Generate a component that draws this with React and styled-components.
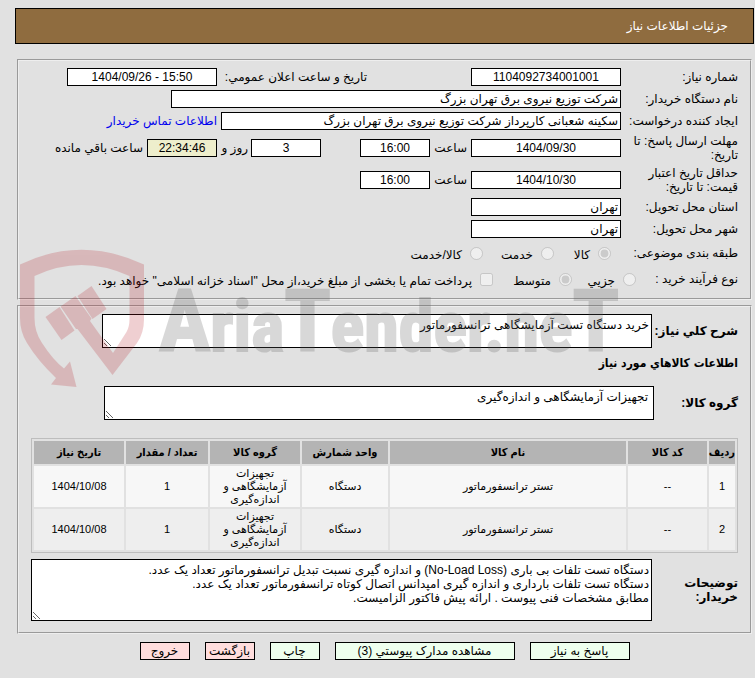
import styled, { createGlobalStyle } from "styled-components";

const items = [
    { row: 1, code: "--", name: "تستر ترانسفورماتور", unit: "دستگاه", group: "تجهیزات آزمایشگاهی و اندازه‌گیری", count: 1, date: "1404/10/08" },
    { row: 2, code: "--", name: "تستر ترانسفورماتور", unit: "دستگاه", group: "تجهیزات آزمایشگاهی و اندازه‌گیری", count: 1, date: "1404/10/08" },
];

const comment = `دستگاه تست تلفات بی باری (No-Load Loss) و اندازه گیری نسبت تبدیل ترانسفورماتور تعداد یک عدد.
دستگاه تست تلفات بارداری و اندازه گیری امپدانس اتصال کوتاه ترانسفورماتور تعداد یک عدد.
مطابق مشخصات فنی پیوست . ارائه پیش فاکتور الزامیست.`;

const App = () => {
    return (
        <Page dir="rtl">
            <GlobalStyle />
            <Header><Title>جزئیات اطلاعات نیاز</Title></Header>
            <Panel $last={false}>
                <Row>
                    <Label htmlFor="number">شماره نیاز:</Label>
                    <Field id="number" $w={150} $center readOnly value="1104092734001001" />
                    <Side $start={104} $w={146} htmlFor="announce">تاریخ و ساعت اعلان عمومي:</Side>
                    <Field id="announce" $w={150} $center readOnly dir="ltr" value="1404/09/26 - 15:50" />
                </Row>
                <Row>
                    <Label htmlFor="buyer">نام دستگاه خریدار:</Label>
                    <Field id="buyer" $w={450} readOnly value="شرکت توزیع نیروی برق تهران بزرگ" />
                </Row>
                <Row>
                    <Label htmlFor="creator">ایجاد کننده درخواست:</Label>
                    <Field id="creator" $w={400} readOnly value="سکینه شعبانی کارپرداز شرکت توزیع نیروی برق تهران بزرگ" />
                    <ContactLink href="#">اطلاعات تماس خریدار</ContactLink>
                </Row>
                <Row $h={32}>
                    <Label htmlFor="deadline">مهلت ارسال پاسخ: تا تاریخ:</Label>
                    <Field id="deadline" $w={150} $center readOnly value="1404/09/30" />
                    <Unit htmlFor="deadlineHour">ساعت</Unit>
                    <Field id="deadlineHour" $w={70} $center readOnly value="16:00" />
                    <Gap />
                    <Field id="days" $w={70} $center readOnly value="3" />
                    <Days htmlFor="days">روز و</Days>
                    <Field id="left" $w={70} $center $bg="#eeeecc" readOnly value="22:34:46" />
                    <Side $start={4} htmlFor="left">ساعت باقي مانده</Side>
                </Row>
                <Row $h={32}>
                    <Label htmlFor="validity">حداقل تاریخ اعتبار قیمت: تا تاریخ:</Label>
                    <Field id="validity" $w={150} $center readOnly value="1404/10/30" />
                    <Unit htmlFor="validityHour">ساعت</Unit>
                    <Field id="validityHour" $w={70} $center readOnly value="16:00" />
                </Row>
                <Row>
                    <Label htmlFor="province">استان محل تحویل:</Label>
                    <Field id="province" $w={150} readOnly value="تهران" />
                </Row>
                <Row>
                    <Label htmlFor="city">شهر محل تحویل:</Label>
                    <Field id="city" $w={150} readOnly value="تهران" />
                </Row>
                <Row $h={26}>
                    <Caption $w={127}>طبقه بندی موضوعی:</Caption>
                    <Choice $w={57}><Tick type="radio" name="subject" disabled defaultChecked /><span>کالا</span></Choice>
                    <Choice $w={71}><Tick type="radio" name="subject" disabled /><span>خدمت</span></Choice>
                    <Choice><Tick type="radio" name="subject" disabled /><span>کالا/خدمت</span></Choice>
                </Row>
                <Row $h={26}>
                    <Caption $w={102}>نوع فرآیند خرید :</Caption>
                    <Choice $w={64}><Tick type="radio" name="process" disabled /><span>جزیي</span></Choice>
                    <Choice $w={79}><Tick type="radio" name="process" disabled defaultChecked /><span>متوسط</span></Choice>
                    <Choice><Tick type="checkbox" disabled /><span>پرداخت تمام یا بخشی از مبلغ خرید،از محل "اسناد خزانه اسلامی" خواهد بود.</span></Choice>
                </Row>
            </Panel>
            <Panel $last>
                <Block $top={2}>
                    <BoldLabel htmlFor="summary">شرح کلي نیاز:</BoldLabel>
                    <Area id="summary" $h={34} readOnly value="خرید دستگاه تست آزمایشگاهی ترانسفورماتور" />
                </Block>
                <Heading>اطلاعات کالاهاي مورد نیاز</Heading>
                <Block $top={16}>
                    <BoldLabel htmlFor="group" $w={84}>گروه کالا:</BoldLabel>
                    <Area id="group" $h={34} $pad={5} readOnly value="تجهیزات آزمایشگاهی و اندازه‌گیری" />
                </Block>
                <Table>
                    <colgroup>
                        <Col $w={26} /><Col $w={79} /><Col /><Col $w={86} /><Col $w={90} /><Col $w={82} /><Col $w={90} />
                    </colgroup>
                    <thead>
                        <tr>
                            <th>ردیف</th>
                            <th>کد کالا</th>
                            <th>نام کالا</th>
                            <th>واحد شمارش</th>
                            <th>گروه کالا</th>
                            <th>تعداد / مقدار</th>
                            <th>تاریخ نیاز</th>
                        </tr>
                    </thead>
                    <tbody>
                        {items.map((item) => (
                            <tr key={item.row}>
                                <td>{item.row}</td>
                                <td>{item.code}</td>
                                <td>{item.name}</td>
                                <td>{item.unit}</td>
                                <td>{item.group}</td>
                                <td>{item.count}</td>
                                <td>{item.date}</td>
                            </tr>
                        ))}
                    </tbody>
                </Table>
                <Block $top={6}>
                    <BoldLabel htmlFor="comment">توضیحات خریدار:</BoldLabel>
                    <Area id="comment" $h={62} $wide readOnly value={comment} />
                </Block>
            </Panel>
            <Actions>
                <Button $w={100}>پاسخ به نیاز</Button>
                <Button $w={180}>مشاهده مدارک پیوستي (3)</Button>
                <Button $w={50}>چاپ</Button>
                <Button $w={50} $red>بازگشت</Button>
                <Button $w={50} $red>خروج</Button>
            </Actions>
            <Watermark />
        </Page>
    )
}

const Watermark = () => (
    <Stamp width="640" height="150" viewBox="0 0 640 150" direction="ltr" aria-hidden="true">
        <g fill="#b3161f" opacity="0.2">
            <path d="M5 24.5Q66 -5 129 24.5V79Q129 93 122 103L97.500 135L62.500 89L61 89L45.500 66.500L60.500 56L76.500 78.500L75 81L98 113L111.500 92Q114.500 87 114.500 79V36Q66 14 19.500 36V78Q19.500 92 27 103Q38 120 49 128.500L55 121.500L61.500 147L36 144.500L41 138Q23 121 12 103Q5 92 5 78Z" />
            <path d="M30.500 77L44.500 67L59.500 90.500L46.500 100Z" />
            <path d="M62.500 56L76.500 46L91.500 69L77.500 79Z" />
        </g>
        <text x="144" y="111"><tspan className="big">A</tspan>ria<tspan className="big">T</tspan>ender.ne<tspan className="big">T</tspan></text>
    </Stamp>
)

const GlobalStyle = createGlobalStyle`
    body {
        margin: 0;
        background: #e1e1e1;
    }
    body, input, textarea, button {
        font-family: "Liberation Sans", "DejaVu Sans", sans-serif;
        font-size: 12px;
        line-height: 14px;
        color: #000;
    }
    *, *::before, *::after {
        box-sizing: border-box;
    }
`;

const Page = styled.div`
    position: relative;
    padding: 8px 1px 18px 15px;
`;

const Header = styled.header`
    display: flex;
    align-items: center;
    height: 36px;
    padding: 0 25px;
    border: 1px solid #000;
    background: #8f6c3f;
`;

const Title = styled.h1`
    margin: 0;
    font-size: 12px;
    font-weight: 400;
    color: #fff;
`;

const Panel = styled.fieldset`
    margin: ${({ $last }) => ($last ? "5px 2px 0" : "15px 2px 0")};
    padding: ${({ $last }) => ($last ? "5px 12px 11px" : "5px 12px 6px")};
    min-width: 0;
    border: 2px groove #eee;
`;

const Row = styled.div`
    display: flex;
    align-items: center;
    height: ${({ $h = 22 }) => $h}px;
`;

const Label = styled.label`
    flex: none;
    width: 117px;
    padding-left: 4px;
`;

const Caption = styled.span`
    flex: none;
    width: ${({ $w }) => $w}px;
`;

const Side = styled.label`
    flex: none;
    width: ${({ $w }) => ($w ? `${$w}px` : "auto")};
    margin-right: ${({ $start }) => $start}px;
    margin-left: 4px;
    white-space: nowrap;
`;

const Unit = styled.label`
    flex: none;
    width: 41px;
    padding-right: 4px;
`;

const Days = styled.label`
    flex: none;
    width: 34px;
    padding-right: 3px;
`;

const Gap = styled.span`
    width: 39px;
`;

const Field = styled.input`
    flex: none;
    width: ${({ $w }) => $w}px;
    height: 18px;
    padding: 0 2px;
    border: 1px solid #000;
    background: ${({ $bg = "#fff" }) => $bg};
    text-align: ${({ $center }) => ($center ? "center" : "right")};
`;

const ContactLink = styled.a`
    margin-right: 4px;
    color: #0000ee;
    text-decoration: none;
`;

const Choice = styled.label`
    display: flex;
    flex: none;
    align-items: center;
    gap: 8px;
    width: ${({ $w }) => ($w ? `${$w}px` : "auto")};
    white-space: nowrap;
    span {
        padding-top: 4px;
    }
`;

const Tick = styled.input`
    flex: none;
    width: 13px;
    height: 13px;
    margin: 0;
`;

const Block = styled.div`
    display: flex;
    align-items: center;
    margin-top: ${({ $top }) => $top}px;
`;

const BoldLabel = styled.label`
    flex: none;
    width: ${({ $w = 86 }) => $w}px;
    font-weight: 700;
`;

const Area = styled.textarea`
    display: block;
    flex: ${({ $wide }) => ($wide ? "1" : "0 1 550px")};
    min-width: 0;
    height: ${({ $h }) => $h}px;
    margin: 0;
    padding: 3px ${({ $pad = 2 }) => $pad}px;
    border: 1px solid #000;
    border-radius: 0;
    background: #fff;
    overflow: hidden;
`;

const Heading = styled.h2`
    margin: 8px 0 0;
    font-family: "DejaVu Sans Condensed", "DejaVu Sans", sans-serif;
    font-size: 12px;
    font-weight: 700;
`;

const Table = styled.table`
    width: 100%;
    margin-top: 18px;
    table-layout: fixed;
    border: 1px solid #bdbdbd;
    border-collapse: separate;
    border-spacing: 2px;
    font-size: 11px;
    line-height: 13px;
    text-align: center;
    th {
        height: 23px;
        padding: 0;
        background: #b4b4b4;
        font-family: "Liberation Sans", "DejaVu Sans Condensed", "DejaVu Sans", sans-serif;
        font-weight: 700;
        white-space: nowrap;
    }
    td {
        height: 41px;
        padding: 1px;
        background: #f7f7f7;
    }
    tr:nth-child(2) td {
        background: #eee;
    }
`;

const Col = styled.col`
    width: ${({ $w }) => ($w ? `${$w}px` : "auto")};
`;

const Actions = styled.div`
    display: flex;
    justify-content: center;
    gap: 15px;
    margin-top: 8px;
`;

const Button = styled.button`
    width: ${({ $w }) => $w}px;
    height: 18px;
    padding: 0;
    border: 1px solid #000;
    background: ${({ $red }) => ($red ? "#ffdddd" : "#eeffee")};
    white-space: nowrap;
`;

const Stamp = styled.svg`
    position: absolute;
    top: 240px;
    left: 15px;
    pointer-events: none;
    text {
        font-family: "Liberation Sans Narrow", "Roboto Condensed", "Open Sans Condensed", sans-serif;
        font-size: 70px;
        font-weight: 700;
        fill: #606060;
        stroke: #606060;
        stroke-width: 2px;
        opacity: 0.24;
    }
    .big {
        font-size: 86px;
    }
`;

export default App;
